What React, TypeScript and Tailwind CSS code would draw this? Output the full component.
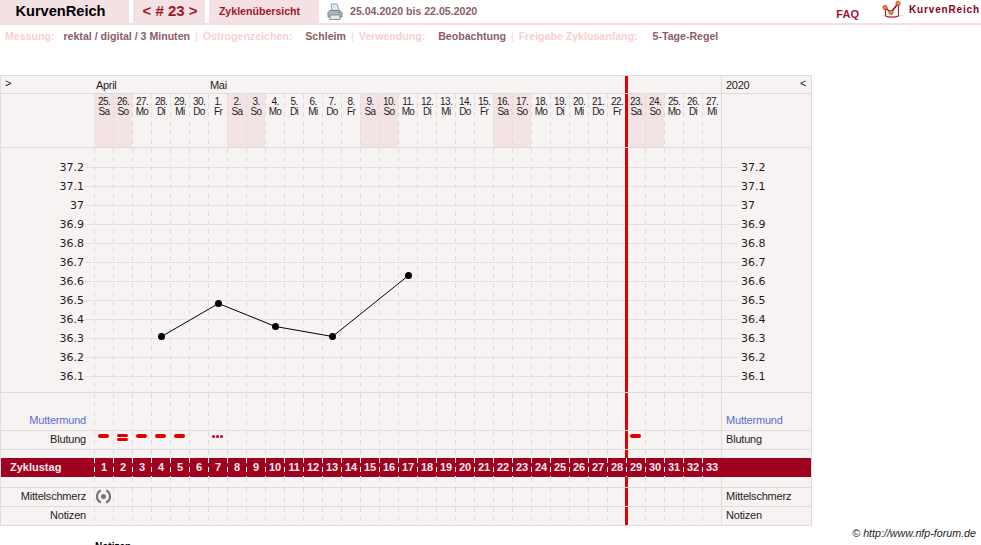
const weekdays = ["Sa", "So", "Mo", "Di", "Mi", "Do", "Fr"];
const dates = [25, 26, 27, 28, 29, 30, 1, 2, 3, 4, 5, 6, 7, 8, 9, 10, 11, 12, 13, 14, 15, 16, 17, 18, 19, 20, 21, 22, 23, 24, 25, 26, 27];
const temps = ["37.2", "37.1", "37", "36.9", "36.8", "36.7", "36.6", "36.5", "36.4", "36.3", "36.2", "36.1"];
const points = [
  [67.5, 188.5],
  [124.5, 155.5],
  [181.5, 178.5],
  [238.5, 188.5],
  [314.5, 127.5],
];

const dash = "bg-[linear-gradient(#dfdbdb_5px,transparent_5px)] bg-[length:1px_9px] bg-repeat-y bg-left-top";
const whiteDash = "bg-[linear-gradient(#ffffff_5px,transparent_5px)] bg-[length:1px_9px] bg-repeat-y bg-left-top";

function RedLine() {
  return <div className="absolute top-0 bottom-0 left-[531px] w-[3px] bg-[#e00000]" />;
}

function Cells({ marks }: { marks?: Record<number, React.ReactNode> }) {
  return (
    <div className="relative flex h-full w-[627px]">
      {dates.map((_, i) => (
        <div key={i} className={`relative h-full w-[19px] ${dash}`}>
          {marks?.[i]}
        </div>
      ))}
      <RedLine />
    </div>
  );
}

function Row({
  h,
  label,
  blue,
  marks,
  last,
}: {
  h: string;
  label: string;
  blue?: boolean;
  marks?: Record<number, React.ReactNode>;
  last?: boolean;
}) {
  const color = blue ? "text-[#5a6ed2]" : "text-[#1c1c1c]";
  return (
    <div className={`flex ${h} ${last ? "" : "border-b border-[#dfdbdb]"}`}>
      <div className={`flex w-[93px] items-end justify-end pr-[8px] pb-[3px] text-[11px] leading-[14px] tracking-[-0.2px] ${color}`}>
        {label}
      </div>
      <Cells marks={marks} />
      <div className={`flex w-[90px] items-end border-l border-[#dfdbdb] pb-[3px] pl-[4px] text-[11px] leading-[14px] tracking-[-0.2px] ${color}`}>
        {label}
      </div>
    </div>
  );
}

function Pill({ className = "top-[3px] h-[3.5px]" }: { className?: string }) {
  return <div className={`absolute left-[4px] w-[11px] rounded-full bg-[#e00000] ${className}`} />;
}

function Printer() {
  return (
    <svg width="16" height="18" viewBox="0 0 16 18" className="mr-[7px] ml-[8px]">
      <path d="M4 1h6l2 7H5z" fill="#dfe9f3" stroke="#8fa3b8" strokeWidth="1" />
      <path d="M1 9.5 3 7.5h10l2 2v4.5H1z" fill="#b0b4b8" stroke="#7f8387" strokeWidth="1" />
      <rect x="3" y="12" width="10" height="4.5" fill="#e6e8ea" stroke="#8b8f93" strokeWidth="1" />
      <rect x="11" y="9" width="2" height="1" fill="#52a852" />
    </svg>
  );
}

function Logo() {
  return (
    <svg width="24" height="20" viewBox="0 0 24 20" className="mr-[3px] overflow-visible">
      <path d="M3.5 6v8c3 1.5 10 1.5 13 0V2" fill="none" stroke="#b0203c" strokeWidth="1.2" />
      <path d="M3 5.5l6 5 7-9" fill="none" stroke="#8a0020" strokeWidth="1.5" />
      <path d="M0 13.5h2M18 13.5h3M5 17h.5M10 17h.5M15 17h.5" stroke="#e6d2d5" strokeWidth="1" />
      <circle cx="3" cy="5.5" r="2.2" fill="#f08a18" stroke="#b0203c" strokeWidth="0.6" />
      <circle cx="9" cy="10.5" r="2.2" fill="#f08a18" stroke="#b0203c" strokeWidth="0.6" />
      <circle cx="16" cy="1.5" r="2.2" fill="#f08a18" stroke="#b0203c" strokeWidth="0.6" />
    </svg>
  );
}

function Info({ name, value, sep, gap }: { name: string; value: string; sep?: boolean; gap: string }) {
  return (
    <>
      {sep && <span className="mx-[5px] font-normal text-[#f9d0d2]">|</span>}
      <span className="text-[#f9d0d2]">{name}</span>
      <span className={`${gap} text-[#8c5c66]`}>{value}</span>
    </>
  );
}

export default function App() {
  const bleed = {
    0: <Pill />,
    1: (
      <>
        <Pill className="top-[3px] h-[3px]" />
        <Pill className="top-[7px] h-[3px]" />
      </>
    ),
    2: <Pill />,
    3: <Pill />,
    4: <Pill />,
    6: (
      <div className="absolute top-[4px] left-[4px] flex gap-[1.5px]">
        <div className="size-[2.5px] rounded-full bg-[#c00020]" />
        <div className="size-[2.5px] rounded-full bg-[#c00020]" />
        <div className="size-[2.5px] rounded-full bg-[#c00020]" />
      </div>
    ),
    28: <Pill />,
  };

  const pain = {
    0: (
      <svg width="15" height="15" viewBox="0 0 15 15" className="absolute top-[1px] left-[2px]">
        <path d="M4.8 1.6a6.5 6.5 0 0 0 0 11.8M10.2 1.6a6.5 6.5 0 0 1 0 11.8" fill="none" stroke="#747474" strokeWidth="2.2" />
        <circle cx="7.5" cy="7.5" r="2.5" fill="#747474" />
      </svg>
    ),
  };

  return (
    <div className="h-[545px] overflow-hidden bg-white font-['Liberation_Sans',Arial,sans-serif] text-black">
      <header className="flex h-[25px] items-stretch border-b-2 border-[#f3dfe1]">
        <div className="flex w-[129px] items-center justify-center bg-[#f3e1e3] pr-[8px] text-[14.6px] font-bold text-black">KurvenReich</div>
        <div className="ml-[4px] flex w-[72px] items-center justify-center bg-[#f3e1e3] pl-[2px] text-[15px] font-bold text-[#a5152a]">
          &lt; # 23 &gt;
        </div>
        <div className="ml-[4px] flex w-[110px] items-center justify-center bg-[#f3e1e3] pr-[9px] text-[10.6px] font-bold text-[#a5152a]">
          Zyklenübersicht
        </div>
        <div className="flex items-center">
          <Printer />
          <span className="text-[10.6px] font-bold text-[#8c5c66]">25.04.2020 bis 22.05.2020</span>
        </div>
        <div className="ml-auto flex items-center">
          <span className="mt-[6px] mr-[23px] text-[11px] font-bold text-[#a5152a]">FAQ</span>
          <Logo />
          <span className="mr-[1px] mb-[4px] text-[10px] font-bold tracking-[0.85px] text-[#8a0020]">KurvenReich</span>
        </div>
      </header>

      <div className="flex h-[50px] items-start pt-[4px] pl-[5px] text-[10.6px] leading-[14px] font-bold whitespace-pre">
        <Info gap="ml-[9px]" name="Messung:" value="rektal / digital / 3 Minuten" />
        <Info gap="ml-[13px]" sep name="Östrogenzeichen:" value="Schleim" />
        <Info gap="ml-[13px]" sep name="Verwendung:" value="Beobachtung" />
        <Info gap="ml-[15px]" sep name="Freigabe Zyklusanfang:" value="5-Tage-Regel" />
      </div>

      <main className="w-[812px] border border-[#dfdbdb] bg-[#f8f3f3]">
        {/* Monate */}
        <div className="flex h-[18px] border-b border-[#dfdbdb] text-[11px] leading-[18px] tracking-[-0.3px] text-[#1c1c1c]">
          <div className="w-[93px] pl-[4px] leading-[14px]">&gt;</div>
          <div className="relative flex w-[627px]">
            <span className="w-[114px] pl-[2px]">April</span>
            <span className="pl-[2px]">Mai</span>
            <RedLine />
          </div>
          <div className="flex w-[90px] justify-between border-l border-[#dfdbdb] pr-[5px] pl-[4px]">
            <span>2020</span>
            <span className="leading-[14px]">&lt;</span>
          </div>
        </div>

        {/* Tage */}
        <div className="flex h-[54px] border-b border-[#dfdbdb]">
          <div className="w-[93px]" />
          <div className="relative flex w-[627px]">
            {dates.map((d, i) => {
              const wd = weekdays[i % 7];
              const weekend = wd === "Sa" || wd === "So";
              return (
                <div
                  key={i}
                  className={`h-full w-[19px] pt-[3px] pl-[1px] text-center text-[10px] leading-[9.5px] tracking-[-0.6px] text-[#1c1c1c] ${dash} ${weekend ? "bg-[#f3e3e5]" : ""}`}
                >
                  {d}.<br />
                  {wd}
                </div>
              );
            })}
            <RedLine />
          </div>
          <div className="w-[90px] border-l border-[#dfdbdb]" />
        </div>

        {/* Temperatur */}
        <div className="flex h-[245px] border-b border-[#dfdbdb] font-['DejaVu_Sans',sans-serif] text-[11px] text-[#1c1c1c]">
          <div className="w-[93px] pt-[10px] pr-[10px] text-right">
            {temps.map((t) => (
              <div key={t} className="h-[19px] leading-[19px]">
                {t}
              </div>
            ))}
          </div>
          <div className="relative w-[627px]">
            <Cells />
            <svg width="627" height="244" viewBox="0 0 627 244" className="absolute top-0 left-0 overflow-visible">
              {temps.map((t, i) => (
                <path key={t} d={`M-9 ${19.5 + i * 19}H644`} stroke="#e3dfdf" strokeWidth="1" />
              ))}
              <polyline points={points.map((p) => p.join(",")).join(" ")} fill="none" stroke="#000" strokeWidth="1" />
              {points.map((p) => (
                <circle key={p[0]} cx={p[0]} cy={p[1]} r="3.5" fill="#000" />
              ))}
              <rect x="531" y="0" width="3" height="244" fill="#e00000" />
            </svg>
          </div>
          <div className="w-[90px] border-l border-[#dfdbdb] pt-[10px] pl-[19px]">
            {temps.map((t) => (
              <div key={t} className="h-[19px] leading-[19px]">
                {t}
              </div>
            ))}
          </div>
        </div>

        <Row h="h-[38px]" label="Muttermund" blue />
        <Row h="h-[19px]" label="Blutung" marks={bleed} />
        <div className="flex h-[8px]">
          <div className="w-[93px]" />
          <Cells />
          <div className="w-[90px] border-l border-[#dfdbdb]" />
        </div>

        {/* Zyklustag */}
        <div className="flex h-[19px] bg-[#9f001f] text-[11px] leading-[19px] font-bold text-[#f8eaec]">
          <div className="w-[93px] pl-[9px]">Zyklustag</div>
          <div className="flex w-[627px]">
            {dates.map((_, i) => (
              <div key={i} className={`h-full w-[19px] pl-[1px] text-center tracking-[-0.2px] ${whiteDash}`}>
                {i + 1}
              </div>
            ))}
          </div>
        </div>

        <div className="flex h-[11px] border-b border-[#dfdbdb]">
          <div className="w-[93px]" />
          <Cells />
          <div className="w-[90px] border-l border-[#dfdbdb]" />
        </div>
        <Row h="h-[19px]" label="Mittelschmerz" marks={pain} />
        <Row h="h-[18px]" label="Notizen" last />
      </main>

      <footer className="pt-[1px] pr-[5px] text-right text-[10.7px] leading-[13px] text-[#1c1c1c] italic">© http://www.nfp-forum.de</footer>
      <div className="pt-[1px] pl-[95px] text-[10px] leading-[12px] font-bold">Notizen</div>
    </div>
  );
}
